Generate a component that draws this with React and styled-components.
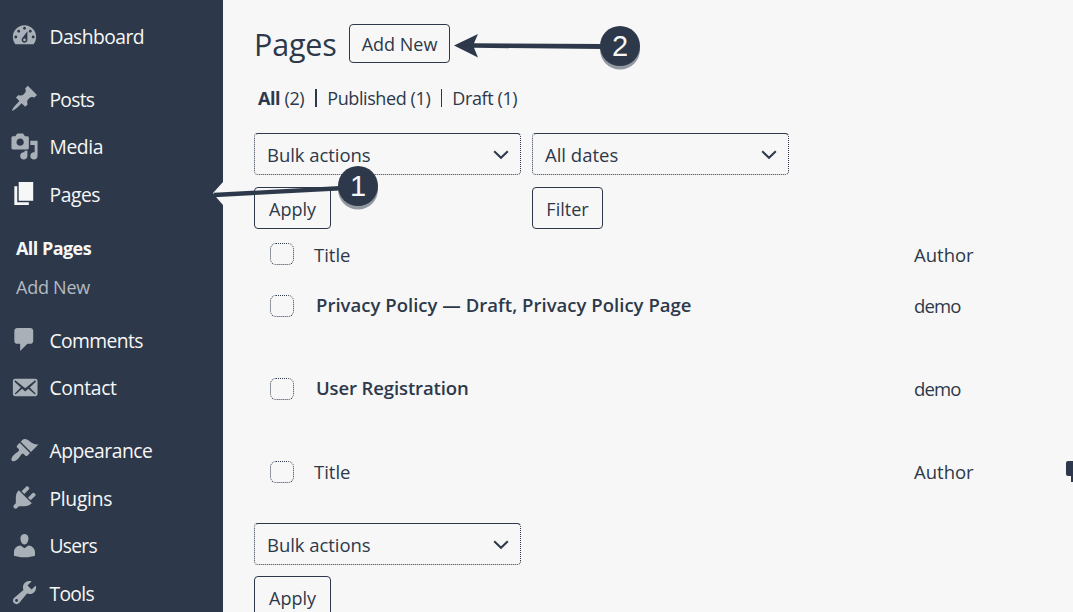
import React from "react";
import styled, { createGlobalStyle } from "styled-components";

const INK = "#2d394a";
const PAPER = "#f7f7f7";

const Global = createGlobalStyle`
  * { box-sizing: border-box; }
  body {
    margin: 0;
    width: 1073px;
    height: 612px;
    overflow: hidden;
    background: ${PAPER};
    color: ${INK};
    font-family: "Open Sans", "Noto Sans", sans-serif;
  }
`;

const Screen = styled.div`
  position: relative;
  display: flex;
  width: 1073px;
  height: 612px;
  overflow: hidden;
`;

const Sidebar = styled.nav`
  flex: none;
  width: 223px;
  height: 612px;
  padding-top: 13px;
  background: ${INK};
  color: ${PAPER};
  overflow: hidden;
`;

const MenuItem = styled.a`
  display: flex;
  align-items: center;
  gap: 10.5px;
  height: 47.6px;
  margin-top: ${(p) => (p.$group ? "15.4px" : "0")};
  padding-left: 10px;
  font-size: 19.3px;
  line-height: 26px;
  font-weight: ${(p) => (p.$current ? 500 : 400)};
  letter-spacing: ${(p) => p.$track || 0}px;
  white-space: nowrap;
`;

const IconSvg = styled.svg`
  flex: none;
  width: 29px;
  height: 29px;
  margin-top: -2px;
  fill: ${(p) => (p.$current ? PAPER : "#a9b0b8")};
`;

const Submenu = styled.div`
  display: flex;
  flex-direction: column;
  height: 98px;
  padding: 10px 0 0 16px;
`;

const SubItem = styled.a`
  height: 39px;
  line-height: 39px;
  font-size: 18px;
  font-weight: ${(p) => (p.$current ? 700 : 400)};
  color: ${(p) => (p.$current ? PAPER : "#b4bac1")};
  letter-spacing: ${(p) => p.$track || 0}px;
`;

const Main = styled.main`
  flex: 1;
  padding: 24px 0 0 31px;
`;

const Header = styled.header`
  display: flex;
  height: 39px;
`;

const Heading = styled.h1`
  margin: 0;
  width: 95px;
  font-size: 30.5px;
  font-weight: 400;
  line-height: 40px;
  letter-spacing: -0.2px;
`;

const Button = styled.button`
  flex: none;
  width: ${(p) => p.$w}px;
  height: ${(p) => p.$h || 42}px;
  padding: ${(p) => (p.$h ? 0 : 1)}px 0 0;
  border: 1px solid ${INK};
  border-radius: 4px;
  background: transparent;
  color: ${INK};
  font: ${(p) => p.$weight || 400} 18px "Open Sans", sans-serif;
  letter-spacing: ${(p) => p.$track || 0}px;
`;

const Views = styled.div`
  display: flex;
  align-items: center;
  height: 26px;
  margin: 22px 0 0 4px;
  font-size: 18px;
  letter-spacing: -0.4px;
  white-space: pre;
`;

const Divider = styled.span`
  width: ${(p) => p.$w || 1}px;
  height: 18px;
  margin: 0 10.5px;
  background: ${INK};
`;

const Filters = styled.div`
  display: flex;
  gap: 11px;
  margin-top: ${(p) => p.$top}px;
`;

const FilterGroup = styled.div`
  display: flex;
  flex-direction: column;
  gap: ${(p) => p.$gap || 12}px;
  width: ${(p) => p.$w}px;
`;

const Select = styled.div`
  display: flex;
  align-items: center;
  justify-content: space-between;
  height: 42px;
  padding: 0 11px 0 12px;
  border: 1px dotted ${INK};
  border-top-style: solid;
  border-radius: 4px;
  font-size: 18.5px;
  letter-spacing: ${(p) => p.$track || 0}px;

  svg {
    margin-top: 2px;
  }
`;

const Row = styled.div`
  display: grid;
  grid-template-columns: ${(p) => (p.$entry ? 62 : 60)}px ${(p) => (p.$entry ? 598 : 600)}px 1fr;
  align-items: center;
  height: ${(p) => p.$h}px;
  font-size: 18.5px;
`;

const Checkbox = styled.span`
  width: 24px;
  height: 22px;
  margin-left: 15.5px;
  border: 1px dotted ${INK};
  border-radius: 6px;
`;

const Cell = styled.span`
  font-weight: ${(p) => p.$weight || 400};
  letter-spacing: ${(p) => p.$track || 0}px;
  padding-bottom: ${(p) => p.$lift || 0}px;
  white-space: nowrap;
`;

const Annotations = styled.svg`
  position: absolute;
  inset: 0;
  width: 1073px;
  height: 612px;
  pointer-events: none;
`;

const icons = {
  dashboard:
    "M3.76 16h12.48c1.1-1.37 1.76-3.11 1.76-5 0-4.42-3.58-8-8-8s-8 3.58-8 8c0 1.89.66 3.63 1.76 5zM10 4c.55 0 1 .45 1 1s-.45 1-1 1-1-.45-1-1 .45-1 1-1zM6 6c.55 0 1 .45 1 1s-.45 1-1 1-1-.45-1-1 .45-1 1-1zm8 0c.55 0 1 .45 1 1s-.45 1-1 1-1-.45-1-1 .45-1 1-1zm-5.37 5.55L12 7v6c0 1.1-.9 2-2 2s-2-.9-2-2c0-.57.24-1.08.63-1.45zM4 10c.55 0 1 .45 1 1s-.45 1-1 1-1-.45-1-1 .45-1 1-1zm12 0c.55 0 1 .45 1 1s-.45 1-1 1-1-.45-1-1 .45-1 1-1zm-5 3c0-.55-.45-1-1-1s-1 .45-1 1 .45 1 1 1 1-.45 1-1z",
  post: "M10.44 3.02l1.82-1.82 6.36 6.35-1.83 1.82c-1.05-.68-2.48-.57-3.41.36l-.75.75c-.92.93-1.04 2.35-.35 3.41l-1.83 1.82-2.41-2.41-2.8 2.79c-.42.42-3.38 2.71-3.8 2.29s1.86-3.39 2.28-3.81l2.79-2.79L4.1 9.36l1.83-1.82c1.05.69 2.48.57 3.4-.36l.75-.75c.93-.92 1.05-2.35.36-3.41z",
  media:
    "M13 11V4c0-.55-.45-1-1-1h-1.67L9 1H5L3.67 3H2c-.55 0-1 .45-1 1v7c0 .55.45 1 1 1h10c.55 0 1-.45 1-1zM7 4.5c1.38 0 2.5 1.12 2.5 2.5S8.38 9.5 7 9.5 4.5 8.38 4.5 7 5.62 4.5 7 4.5zM14 6h5v10.5c0 1.38-1.12 2.5-2.5 2.5S14 17.88 14 16.5s1.12-2.5 2.5-2.5c.17 0 .34.02.5.05V9h-3V6zm-4 8.05V13h2v3.5c0 1.38-1.12 2.5-2.5 2.5S7 17.88 7 16.5 8.12 14 9.5 14c.17 0 .34.02.5.05z",
  page: "M6 15V2h10v13H6zm-1 1h8v2H3V5h2v11z",
  comments:
    "M5 2h9c1.1 0 2 .9 2 2v7c0 1.1-.9 2-2 2h-2l-5 5v-5H5c-1.1 0-2-.9-2-2V4c0-1.1.9-2 2-2z",
  contact:
    "M19 14.5v-9c0-.83-.67-1.5-1.5-1.5H3.49c-.83 0-1.5.67-1.5 1.5v9c0 .83.67 1.5 1.5 1.5H17.5c.83 0 1.5-.67 1.5-1.5zm-1.31-9.11c.33.33.15.67-.03.84L13.6 9.95l3.9 4.06c.12.14.2.36.06.51-.13.16-.43.15-.56.05l-4.37-3.73-2.14 1.95-2.13-1.95-4.37 3.73c-.13.1-.43.11-.56-.05-.14-.15-.06-.37.06-.51l3.9-4.06-4.06-3.72c-.18-.17-.36-.51-.03-.84s.67-.17.95.07l6.24 5.04 6.25-5.04c.28-.24.62-.4.95-.07z",
  appearance:
    "M14.48 11.06L7.41 3.99l1.5-1.5c.5-.56 2.3-.47 3.51.32 1.21.8 1.43 1.28 2.91 2.1 1.18.64 2.45 1.26 4.45.85zm-.71.71L6.7 4.7 4.93 6.47c-.39.39-.39 1.02 0 1.41l1.06 1.06c.39.39.39 1.03 0 1.42-.6.6-1.43 1.11-2.21 1.69-.35.26-.7.53-1.01.84C1.43 14.23.4 16.08 1.4 17.07c.99 1 2.84-.03 4.18-1.36.31-.31.58-.66.85-1.02.57-.78 1.08-1.61 1.69-2.21.39-.39 1.02-.39 1.41 0l1.06 1.06c.39.39 1.02.39 1.41 0z",
  plugins:
    "M13.11 4.36L9.87 7.6 8 5.73l3.24-3.24c.35-.34 1.05-.2 1.56.32.52.51.66 1.21.31 1.55zm-8 1.77l.91-1.12 9.01 9.01-1.19.84c-.71.71-2.63 1.16-3.82 1.16H6.14L4.9 17.26c-.59.59-1.54.59-2.12 0-.59-.58-.59-1.53 0-2.12l1.24-1.24v-3.88c0-1.13.4-3.19 1.09-3.89zm7.26 3.97l3.24-3.24c.34-.35 1.04-.21 1.55.31.52.51.66 1.21.31 1.55l-3.24 3.25z",
  users:
    "M10 9.25c-2.27 0-2.73-3.44-2.73-3.44C7 4.02 7.82 2 9.97 2c2.16 0 2.98 2.02 2.71 3.81 0 0-.41 3.44-2.68 3.44zm0 2.57L12.72 10c2.39 0 4.52 2.33 4.52 4.53v2.49s-3.65 1.13-7.24 1.13c-3.65 0-7.24-1.13-7.24-1.13v-2.49c0-2.25 1.94-4.48 4.47-4.48z",
  tools:
    "M16.68 9.77c-1.34 1.34-3.3 1.67-4.95.99l-5.41 6.52c-.99.99-2.59.99-3.58 0s-.99-2.59 0-3.57l6.52-5.42c-.68-1.65-.35-3.61.99-4.95 1.28-1.28 3.12-1.62 4.72-1.06l-2.89 2.89 2.82 2.82 2.86-2.87c.53 1.58.18 3.39-1.08 4.65zM3.81 16.21c.4.39 1.04.39 1.43 0 .4-.4.4-1.04 0-1.43-.39-.4-1.03-.4-1.43 0-.39.39-.39 1.03 0 1.43z",
};

function Item({ icon, label, current, group, track }) {
  return (
    <MenuItem $current={current} $group={group} $track={track}>
      <IconSvg viewBox="0 0 20 20" $current={current}>
        <path d={icons[icon]} fillRule="evenodd" />
      </IconSvg>
      {label}
    </MenuItem>
  );
}

function Dropdown({ label, track }) {
  return (
    <Select $track={track}>
      {label}
      <svg width="16" height="10" viewBox="0 0 16 10" fill="none" stroke={INK} strokeWidth="2">
        <path d="M1.2 1.2 8 7.8l6.8-6.6" />
      </svg>
    </Select>
  );
}

function Badge({ x, y, n }) {
  return (
    <g>
      <circle cx={x} cy={y + 3.5} r="20" fill={INK} opacity="0.5" />
      <circle cx={x} cy={y} r="20" fill={INK} />
      <text
        x={x}
        y={y + 10.3}
        textAnchor="middle"
        fontFamily="Liberation Sans, sans-serif"
        fontSize="29"
        fill={PAPER}
      >
        {n}
      </text>
    </g>
  );
}

export default function App() {
  return (
    <Screen>
      <Global />
      <Sidebar>
        <Item icon="dashboard" label="Dashboard" track={-0.55} />
        <Item icon="post" label="Posts" group track={-0.75} />
        <Item icon="media" label="Media" track={-0.4} />
        <Item icon="page" label="Pages" current track={-0.45} />
        <Submenu>
          <SubItem $current $track={-0.55}>All Pages</SubItem>
          <SubItem $track={-0.25}>Add New</SubItem>
        </Submenu>
        <Item icon="comments" label="Comments" track={-0.6} />
        <Item icon="contact" label="Contact" track={-0.3} />
        <Item icon="appearance" label="Appearance" group track={-0.5} />
        <Item icon="plugins" label="Plugins" track={-0.3} />
        <Item icon="users" label="Users" track={-0.75} />
        <Item icon="tools" label="Tools" track={-0.7} />
      </Sidebar>
      <Main>
        <Header>
          <Heading>Pages</Heading>
          <Button $w={101} $h={39} $weight={500}>Add New</Button>
        </Header>
        <Views>
          <b>All</b> (2)
          <Divider $w={2} />
          Published (1)
          <Divider />
          Draft (1)
        </Views>
        <Filters $top={22}>
          <FilterGroup $w={267}>
            <Dropdown label="Bulk actions" track={-0.05} />
            <Button $w={77}>Apply</Button>
          </FilterGroup>
          <FilterGroup $w={257}>
            <Dropdown label="All dates" />
            <Button $w={71}>Filter</Button>
          </FilterGroup>
        </Filters>
        <Row $h={50}>
          <Checkbox />
          <Cell>Title</Cell>
          <Cell>Author</Cell>
        </Row>
        <Row $h={54} $entry>
          <Checkbox />
          <Cell $weight={600} $lift={3} $track={0.03}>Privacy Policy — Draft, Privacy Policy Page</Cell>
          <Cell $lift={2} $track={-0.9}>demo</Cell>
        </Row>
        <Row $h={112} $entry>
          <Checkbox />
          <Cell $weight={600} $lift={3} $track={-0.12}>User Registration</Cell>
          <Cell $lift={2} $track={-0.9}>demo</Cell>
        </Row>
        <Row $h={53}>
          <Checkbox />
          <Cell>Title</Cell>
          <Cell>Author</Cell>
        </Row>
        <Filters $top={25}>
          <FilterGroup $w={267} $gap={11}>
            <Dropdown label="Bulk actions" track={-0.05} />
            <Button $w={77}>Apply</Button>
          </FilterGroup>
        </Filters>
      </Main>
      <Annotations viewBox="0 0 1073 612">
        <path d="M213 193 223 182v23l-7-8z" fill={PAPER} />
        <path d="M214 195 340 188.3" stroke={INK} strokeWidth="4.4" />
        <path d="M454 45.5 478 34l-4 9.2 128 .8v5l-128-1.2 4 9.7z" fill={INK} />
        <Badge x={358} y={186} n="1" />
        <Badge x={620} y={46} n="2" />
        <path d="M1073 461h-5q-2 0-2 2v11q0 2 2 2h3v6h2z" fill={INK} />
      </Annotations>
    </Screen>
  );
}
